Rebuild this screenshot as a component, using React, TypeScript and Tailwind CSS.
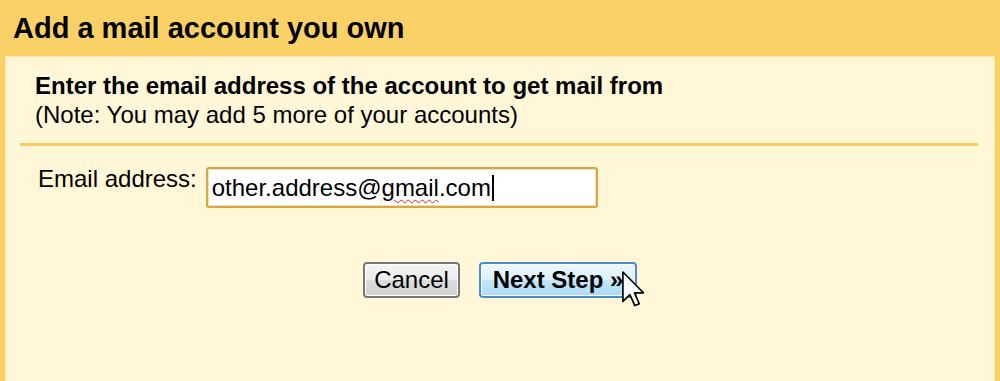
import React from "react";

function Cursor() {
  return (
    <svg
      width="22"
      height="36"
      viewBox="0 0 12 19.5"
      className="absolute left-[622px] top-[271px] pointer-events-none"
    >
      <path
        d="M0.5 0.5 L0.5 16.5 L4.3 12.8 L7 18.8 L9.4 17.8 L6.8 11.9 L11.8 11.9 Z"
        fill="#ffffff"
        stroke="#000000"
        strokeWidth="0.9"
        strokeLinejoin="round"
      />
    </svg>
  );
}

export default function App() {
  return (
    <div className="relative w-[1000px] h-[381px] overflow-hidden bg-[#F9D166] flex flex-col font-['Liberation_Sans',Arial,sans-serif] text-black">
      {/* header */}
      <div className="h-[56px] shrink-0 pl-[13px] pt-[12px]">
        <h1 className="text-[29px] leading-[33px] font-bold">Add a mail account you own</h1>
      </div>

      {/* panel */}
      <div className="flex-1 mx-[5px] bg-[#FFF7D8] border-t border-l border-r border-[#FDE6A6] flex flex-col">
        <div className="pl-[29px] pt-[14px] text-[24px] leading-[29px]">
          <div className="font-bold">Enter the email address of the account to get mail from</div>
          <div>(Note: You may add 5 more of your accounts)</div>
        </div>

        <div className="ml-[14px] mr-[16px] mt-[14px] h-[3px] bg-[#F8C95C]" />

        <div className="flex items-start pl-[32px] mt-[18px]">
          <label className="text-[24px] leading-[29px] mr-[9px]">Email address:</label>
          <div className="mt-[3px] w-[392px] h-[41px] border-2 border-[#D7A544] rounded-[3px] bg-white flex items-center pl-[4px] text-[24px] shadow-[inset_0_0_0_1px_#F3E2B8]">
            <span>other.address@</span>
            <span className="underline decoration-wavy decoration-[#E02020] decoration-1 underline-offset-[3px]">gmail</span>
            <span>.com</span>
            <span className="ml-[1px] w-[2px] h-[26px] bg-black" />
          </div>
        </div>

        <div className="flex justify-center gap-[19px] mt-[54px]">
          <button className="w-[97px] h-[36px] border-2 border-[#777777] rounded-[4px] bg-[linear-gradient(#F4F4F4_0%,#ECECEC_48%,#DCDCDC_52%,#D0D0D0_100%)] text-[24px] leading-none shadow-[inset_0_0_0_1px_#FFFFFF]">
            Cancel
          </button>
          <button className="w-[158px] h-[36px] border-2 border-[#4A8CC7] rounded-[4px] bg-[linear-gradient(#EDF7FD_0%,#DCF1FC_48%,#C2E6FB_52%,#ABDAF5_100%)] text-[24px] font-bold leading-none shadow-[inset_0_0_0_1px_#FFFFFF]">
            Next Step »
          </button>
        </div>
      </div>

      <Cursor />
    </div>
  );
}
